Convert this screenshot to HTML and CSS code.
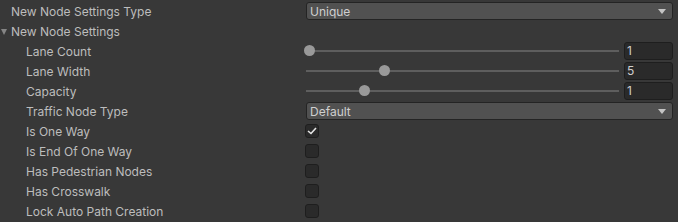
FILE: index.html
```html
<!DOCTYPE html>
<html lang="en">
<head>
  <meta charset="UTF-8"/>
  <title>Node Settings</title>
  <link rel="stylesheet" href="styles.css">
</head>
<body>
  <div class="inspector">
    <div class="row">
      <span class="label">New Node Settings Type</span>
      <div class="field">
        <div class="dropdown"><span>Unique</span><i class="arrow"></i></div>
      </div>
    </div>

    <div class="row foldout">
      <i class="fold-arrow"></i>
      <span class="label">New Node Settings</span>
    </div>

    <div class="row nested">
      <span class="label">Lane Count</span>
      <div class="field slider">
        <div class="track"><div class="thumb" style="--pos: 0"></div></div>
        <div class="number">1</div>
      </div>
    </div>
    <div class="row nested">
      <span class="label">Lane Width</span>
      <div class="field slider">
        <div class="track"><div class="thumb" style="--pos: 0.247"></div></div>
        <div class="number">5</div>
      </div>
    </div>
    <div class="row nested">
      <span class="label">Capacity</span>
      <div class="field slider">
        <div class="track"><div class="thumb" style="--pos: 0.181"></div></div>
        <div class="number">1</div>
      </div>
    </div>
    <div class="row nested">
      <span class="label">Traffic Node Type</span>
      <div class="field">
        <div class="dropdown"><span>Default</span><i class="arrow"></i></div>
      </div>
    </div>

    <div class="row nested">
      <span class="label">Is One Way</span>
      <div class="field">
        <div class="checkbox checked">
          <svg width="10" height="8" viewBox="0 0 10 8"><polyline points="1,4 4,6.5 9,1" fill="none" stroke="#e4e4e4" stroke-width="1.6"/></svg>
        </div>
      </div>
    </div>
    <div class="row nested">
      <span class="label">Is End Of One Way</span>
      <div class="field"><div class="checkbox"></div></div>
    </div>
    <div class="row nested">
      <span class="label">Has Pedestrian Nodes</span>
      <div class="field"><div class="checkbox"></div></div>
    </div>
    <div class="row nested">
      <span class="label">Has Crosswalk</span>
      <div class="field"><div class="checkbox"></div></div>
    </div>
    <div class="row nested">
      <span class="label">Lock Auto Path Creation</span>
      <div class="field"><div class="checkbox"></div></div>
    </div>
  </div>
</body>
</html>
```

FILE: styles.css
```css
:root {
  --bg: #383838;
  --text: #bdbdbd;
  --field: #515151;
  --field-border: #242424;
  --input: #2a2a2a;
  --input-border: #1e1e1e;
  --track: #5e5e5e;
  --thumb: #999;
}

* {
  box-sizing: border-box;
  margin: 0;
  padding: 0;
}

html, body {
  background: var(--bg);
}

body {
  margin: 0;
  font-family: Inter, 'Noto Sans', sans-serif;
  font-size: 12px;
  color: var(--text);
  width: 678px;
  height: 222px;
  overflow: hidden;
}

.inspector {
  padding-top: 1px;
}

.row {
  display: flex;
  align-items: center;
  height: 20px;
  position: relative;
}

.label {
  width: 305px;
  padding-left: 11px;
  white-space: nowrap;
  flex-shrink: 0;
}

.nested .label {
  padding-left: 26px;
}

.fold-arrow {
  position: absolute;
  left: 1px;
  top: 8px;
  width: 0;
  height: 0;
  border-left: 3.5px solid transparent;
  border-right: 3.5px solid transparent;
  border-top: 6px solid #858585;
}

.field {
  width: 368px;
  display: flex;
  align-items: center;
}

.dropdown {
  flex: 1;
  height: 18px;
  margin-left: 1px;
  background: var(--field);
  border: 1px solid var(--field-border);
  border-radius: 3px;
  display: flex;
  align-items: center;
  justify-content: space-between;
  padding: 0 6px 0 3px;
  color: #cfcfcf;
}

.arrow {
  width: 0;
  height: 0;
  border-left: 4px solid transparent;
  border-right: 4px solid transparent;
  border-top: 5px solid #c4c4c4;
}

.slider {
  gap: 5px;
}

.track {
  flex: 1;
  height: 20px;
  position: relative;
}

.track::before {
  content: "";
  position: absolute;
  left: 1px;
  right: 0;
  top: 9px;
  height: 2px;
  background: var(--track);
}

.thumb {
  position: absolute;
  top: 4px;
  left: calc(var(--pos) * (100% - 11px) - 1px);
  width: 11px;
  height: 11px;
  border-radius: 50%;
  background: var(--thumb);
}

.number {
  width: 49px;
  height: 18px;
  background: var(--input);
  border: 1px solid var(--input-border);
  border-radius: 3px;
  padding-left: 2px;
  line-height: 16px;
  color: #cfcfcf;
}

.checkbox {
  width: 14px;
  height: 14px;
  background: var(--input);
  border: 1px solid var(--input-border);
  border-radius: 3px;
  display: flex;
  align-items: center;
  justify-content: center;
}
```
